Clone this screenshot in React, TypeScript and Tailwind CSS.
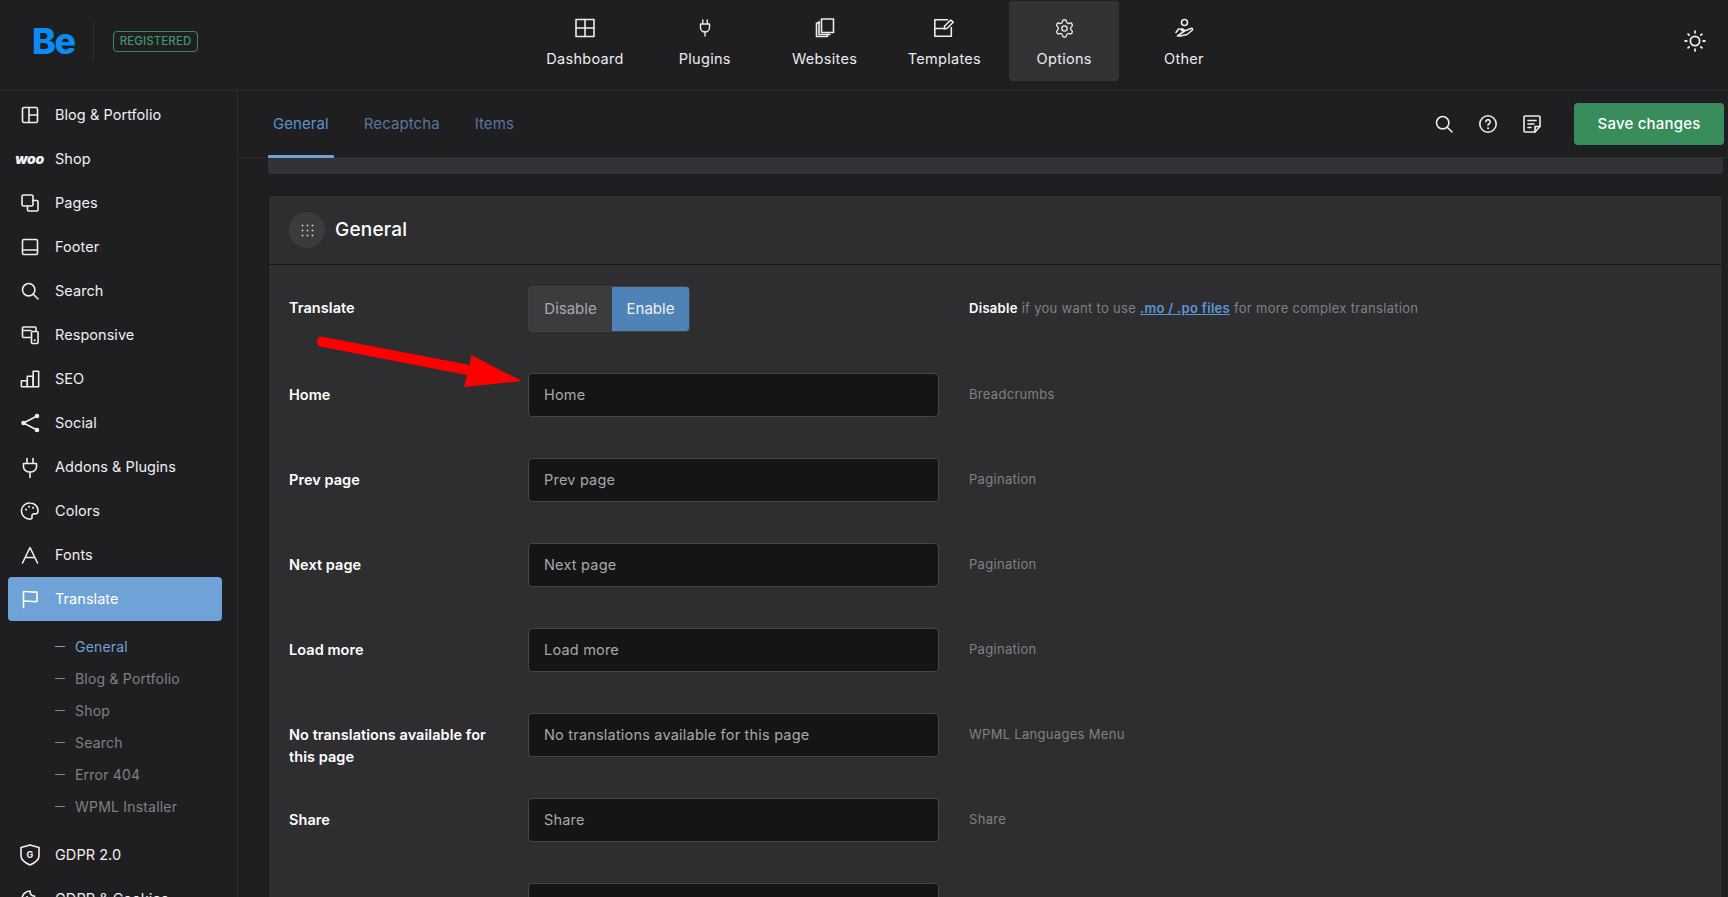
import React from "react";
import { Settings } from "lucide-react";

const S = ({ children, className, size = 20 }: { children: React.ReactNode; className?: string; size?: number }) => (
  <svg width={size} height={size} viewBox="0 0 20 20" fill="none" stroke="currentColor" strokeWidth={1.6} strokeLinecap="round" strokeLinejoin="round" className={className}>
    {children}
  </svg>
);

const IBlog = () => <S><rect x="2.500" y="2.500" width="15" height="15" rx="1.500" /><path d="M9 2.500v15M9 10h8.500" /></S>;
const IPages = () => <S><rect x="2" y="2" width="11" height="11" rx="1.500" /><path d="M13 7.500h4a1 1 0 0 1 1 1V17a1 1 0 0 1-1 1H8.500a1 1 0 0 1-1-1v-4" /></S>;
const IFooter = () => <S><rect x="2.500" y="2.500" width="15" height="15" rx="1.500" /><path d="M2.500 13h15" /></S>;
const ISearch = ({ size = 20 }: { size?: number }) => <S size={size}><circle cx="8.700" cy="8.700" r="6.200" /><path d="M13.300 13.300 18 18" /></S>;
const IResp = () => <S><path d="M11 12.500H3.500a1 1 0 0 1-1-1V3a1 1 0 0 1 1-1h11.500a1 1 0 0 1 1 1v2.500M2.500 5.500H11" /><rect x="11.500" y="6.500" width="6.500" height="12" rx="1" /><path d="M14.700 15.200h.1" strokeWidth={2} /></S>;
const ISeo = () => (
  <svg width="22" height="20" viewBox="0 0 22 20" fill="none" stroke="currentColor" strokeWidth="1.700" strokeLinejoin="round">
    <rect x="1.500" y="12" width="6.500" height="6.500" />
    <rect x="8" y="7" width="6.500" height="11.500" />
    <rect x="14.500" y="1.500" width="6" height="17" />
  </svg>
);
const ISocial = () => <S><path d="M17 3 3.500 10 17 17" /><circle cx="17" cy="3" r="1.500" fill="currentColor" /><circle cx="3.500" cy="10" r="1.500" fill="currentColor" /><circle cx="17" cy="17" r="1.500" fill="currentColor" /></S>;
const IPlug = () => <S size={21}><path d="M7 1v5M13 1v5M3.500 6h13v3.500a6.500 5 0 0 1-13 0zM10 14.500V20" /></S>;
const IPalette = () => <S><path d="M10 2a8 8 0 0 0-1 16c2 .3 3.300-.3 3-2-.2-1.300-.2-2.600 1-3 1.700-.5 3 .3 4-.5 1-1 1-2 1-3 0-4.300-3.600-7.500-8-7.500z" /><path d="M6 8.500h.1M9 5.800h.1M13 6.800h.1" strokeWidth={2} /></S>;
const IFont = () => <S><path d="M2.500 18 10 2.500 17.500 18M5.500 12.500h9" /></S>;
const IFlag = () => <S><path d="M3.500 18.500V2.800c4-1 6 .9 13.500.2v9.500c-6 .7-9-1.200-13.500-.2" /></S>;
const IShield = () => (
  <svg width="20" height="22" viewBox="0 0 20 22" fill="none" stroke="currentColor" strokeWidth="1.600" strokeLinejoin="round">
    <path d="M1 3.500 10 1l9 2.500V12c0 4-4.500 7-9 9-4.500-2-9-5-9-9z" />
    <text x="10" y="14" textAnchor="middle" fontSize="9" fontWeight="700" fill="currentColor" stroke="none" fontFamily="Inter, sans-serif">G</text>
  </svg>
);
const ICookie = () => <S><path d="M10 2a8 8 0 1 0 8 8c-2 0-3.500-1-3.500-3C12 7 10 5.500 10 2z" /><path d="M7 8h.1M7.500 13h.1M12 12.500h.1" strokeWidth={2} /></S>;

const NavDash = () => <S><rect x="1" y="1.500" width="18" height="17" /><path d="M10 1.500v17M1 10h18" /></S>;
const NavPlug = () => <svg width="20" height="20" viewBox="0 0 20 20" fill="none" stroke="currentColor" strokeWidth="1.400" strokeLinecap="round" strokeLinejoin="round"><path d="M7.800 2v4M12.200 2v4M5.500 6h9v3.500a4 4 0 0 1-9 0zM10 13.500V18" /></svg>;
const NavSites = () => <S><path d="M4.500 5H1.500v13.500h11V16" /><path d="M4 3.500v13h11" /><rect x="6.500" y="1" width="12" height="13.500" /></S>;
const NavTpl = () => <S><path d="M13.500 1.800H.8v16.500h16.500V9.500M.8 10.500h8" /><path d="m10 11 .7-3 6-6 2.500 2.200-6 6z" /></S>;
const NavOther = () => <S><circle cx="10.500" cy="4.500" r="3" /><path d="M2 14.500 4.500 11h4l2 1.500h-3M10.500 13l6.500-2.500c1.500-.5 2 1 1 2L13 16.500 6.500 18 3.500 18z" /></S>;

const ISun = () => <S size={22}><circle cx="10" cy="10" r="4.200" /><path d="M10 1v1.500M10 17.500V19M1 10h1.500M17.500 10H19M3.700 3.700l1 1M15.300 15.300l1 1M3.700 16.300l1-1M15.300 4.700l1-1" /></S>;
const IHelp = () => <S><circle cx="10" cy="10" r="8.200" /><path d="M7.800 7.800a2.200 2.200 0 1 1 3.300 2c-.7.400-1.100.8-1.100 1.500" /><path d="M10 14.200h.1" strokeWidth={2} /></S>;
const INotes = () => <S><path d="M18 12.500V3a1.200 1.200 0 0 0-1.200-1H3.200A1.200 1.200 0 0 0 2 3v14a1 1 0 0 0 1 1h10z" /><path d="M13 18v-5.500h5M6 6.500h8M6 10h6M6 13.500h3" /></S>;
const IGrip = () => (
  <svg width="13" height="13" viewBox="0 0 13 13" fill="#d6d6d6">
    {[1.500, 6.500, 11.500].flatMap((y) => [1.500, 6.500, 11.500].map((x) => <rect key={`${x}-${y}`} x={x - 0.8} y={y - 0.8} width="1.600" height="1.600" />))}
  </svg>
);

const Woo = () => <span className="block w-[29px] -ml-[1px] text-[14px] font-black italic tracking-[-0.3px] leading-none text-[#f2f2f2]">woo</span>;

const sideA: [string, React.ReactNode][] = [
  ["Blog & Portfolio", <IBlog />],
  ["Shop", <Woo />],
  ["Pages", <IPages />],
  ["Footer", <IFooter />],
  ["Search", <ISearch />],
  ["Responsive", <IResp />],
  ["SEO", <ISeo />],
  ["Social", <ISocial />],
  ["Addons & Plugins", <IPlug />],
  ["Colors", <IPalette />],
  ["Fonts", <IFont />],
];
const subs = ["General", "Blog & Portfolio", "Shop", "Search", "Error 404", "WPML Installer"];
const nav: [string, React.ReactNode][] = [
  ["Dashboard", <NavDash />],
  ["Plugins", <NavPlug />],
  ["Websites", <NavSites />],
  ["Templates", <NavTpl />],
  ["Options", <Settings size={21} strokeWidth={1.5} />],
  ["Other", <NavOther />],
];
const rows: [React.ReactNode, string, string][] = [
  ["Home", "Home", "Breadcrumbs"],
  ["Prev page", "Prev page", "Pagination"],
  ["Next page", "Next page", "Pagination"],
  ["Load more", "Load more", "Pagination"],
  [<>No translations available for<br />this page</>, "No translations available for this page", "WPML Languages Menu"],
  ["Share", "Share", "Share"],
  ["Page title", "", ""],
];

function SideItem({ label, icon, active }: { label: string; icon: React.ReactNode; active?: boolean }) {
  return (
    <div className={`flex items-center h-11 ml-2 w-[214px] rounded pl-[12px] shrink-0 ${active ? "bg-[#6fa3d8] text-white" : "text-[#efefef]"}`}>
      <span className="w-[20px] flex justify-center items-center shrink-0">{icon}</span>
      <span className="ml-[15px] pb-[1px] text-[14.500px] tracking-[0.05px] whitespace-nowrap">{label}</span>
    </div>
  );
}

export default function App() {
  return (
    <div className="relative w-[1728px] h-[897px] overflow-hidden bg-[#1f1f21] font-['Inter',sans-serif] text-white">
      <header className="flex items-start h-[91px] border-b border-[#2b2b2d]">
        <div className="flex items-start w-[530px] shrink-0 pl-[32px]">
          <span className="mt-[21px] text-[36px] leading-[40px] font-extrabold tracking-[-1.500px] text-[#0b8cf5] w-[61px]">Be</span>
          <span className="mt-[20px] w-px h-[42px] bg-[#2b2b2d]" />
          <span className="mt-[31px] ml-[19px] flex items-center justify-center w-[85px] h-[21px] pt-[1px] rounded border border-[#398c5c] text-[11.500px] font-medium tracking-[0.1px] text-[#449567]">REGISTERED</span>
        </div>
        <nav className="flex gap-[9.800px] mt-px">
          {nav.map(([l, ic]) => (
            <div key={l} className={`flex flex-col items-center w-[110px] h-[80px] rounded pt-[17px] text-[#ececec] ${l === "Options" ? "bg-[#333335]" : ""}`}>
              <span className="h-5">{ic}</span>
              <span className="mt-[11px] text-[14.500px] leading-5 tracking-[0.3px]">{l}</span>
            </div>
          ))}
        </nav>
        <span className="ml-auto mr-[22px] mt-[30px] text-[#f0f0f0]"><ISun /></span>
      </header>

      <div className="flex h-[806px]">
        <aside className="w-[238px] shrink-0 border-r border-[#2b2b2d] pt-[2px] overflow-hidden">
          {sideA.map(([l, ic]) => <SideItem key={l} label={l} icon={ic} />)}
          <SideItem label="Translate" icon={<IFlag />} active />
          <div className="py-[10px]">
            {subs.map((s, i) => (
              <div key={s} className={`flex items-center h-8 pl-[55px] pb-[2px] text-[14px] tracking-[0.2px] ${i === 0 ? "text-[#6fa3d8]" : "text-[#808084]"}`}>
                <span className="w-[10px] h-px bg-current mr-[10px]" />
                {s}
              </div>
            ))}
          </div>
          <SideItem label="GDPR 2.0" icon={<IShield />} />
          <SideItem label="GDPR & Cookies" icon={<ICookie />} />
        </aside>

        <main className="flex-1 min-w-0">
          <div className="flex items-center h-[67px] border-b border-[#2b2b2d] pl-[30px] pr-[4px]">
            <div className="flex h-full gap-[25px] text-[15px] tracking-[0.08px]">
              <div className="relative flex items-center px-[5px] text-[#5d92cc]">
                General
                <span className="absolute left-0 right-0 -bottom-px h-[3px] rounded-t-[1px] bg-[#6fa3d8]" />
              </div>
              <div className="flex items-center px-[5px] text-[#5a7699]">Recaptcha</div>
              <div className="flex items-center px-[5px] text-[#5a7699]">Items</div>
            </div>
            <div className="ml-auto flex items-center gap-6 text-[#ededed]">
              <ISearch />
              <IHelp />
              <INotes />
            </div>
            <div className="ml-8 flex items-center justify-center w-[150px] h-[42px] rounded bg-[#398c5c] text-[15px] font-medium tracking-[0.2px]">Save changes</div>
          </div>

          <div className="ml-[30px] mr-[5px] h-[16px] bg-[#323338] rounded-b" />

          <section className="ml-[30px] mr-[5px] mt-[21px] bg-[#2e2e30] border border-[#19191b] rounded-t">
            <div className="flex items-center h-[69px] pl-[20px] border-b border-[#19191b]">
              <span className="flex items-center justify-center w-9 h-9 rounded-full bg-[#3b3b3d]"><IGrip /></span>
              <span className="ml-[10px] text-[19px] font-medium tracking-[0.2px]">General</span>
            </div>
            <div className="pt-[21px] pl-[20px]">
              <div className="flex items-center h-[46px] mb-[41px]">
                <div className="w-[239px] pb-[3px] text-[14.500px] font-semibold tracking-[0.05px]">Translate</div>
                <div className="flex h-[46px] w-[162px] rounded border border-[#414144] overflow-hidden text-[15px]">
                  <span className="flex items-center justify-center w-[83px] bg-[#3c3c3f] text-[#a8a8ac]">Disable</span>
                  <span className="flex items-center justify-center flex-1 bg-[#4f83b8] text-[#f0f0f0]">Enable</span>
                </div>
                <p className="ml-[279px] text-[13px] tracking-[0.3px] text-[#808085]">
                  <b className="font-semibold text-white">Disable</b> if you want to use <a className="font-semibold text-[#5d96d6] underline">.mo / .po files</a> for more complex translation
                </p>
              </div>
              {rows.map(([label, value, desc], i) => (
                <div key={i} className="flex items-start h-[44px] mb-[41px]">
                  <div className="w-[239px] pt-[11px] text-[14.500px] leading-[22px] font-semibold tracking-[0.05px]">{label}</div>
                  <div className="flex items-center w-[411px] h-[44px] pl-[15px] pr-[14px] rounded border border-[#45454a] bg-[#151515] text-[14.500px] tracking-[0.2px] text-[#a8a8ac]">{value}</div>
                  <div className="ml-[30px] pt-[11px] text-[13px] leading-5 tracking-[0.3px] text-[#808085]">{desc}</div>
                </div>
              ))}
            </div>
          </section>
        </main>
      </div>

      <svg className="absolute left-[315px] top-[335px] pointer-events-none" width="215" height="60" viewBox="315 335 215 60">
        <path d="M321 336.500 C316 337 316 345 320 346.500 L467 375 L464 387 L522 381 L471 355 L470 365 Z" fill="#ff0000" />
      </svg>
    </div>
  );
}
